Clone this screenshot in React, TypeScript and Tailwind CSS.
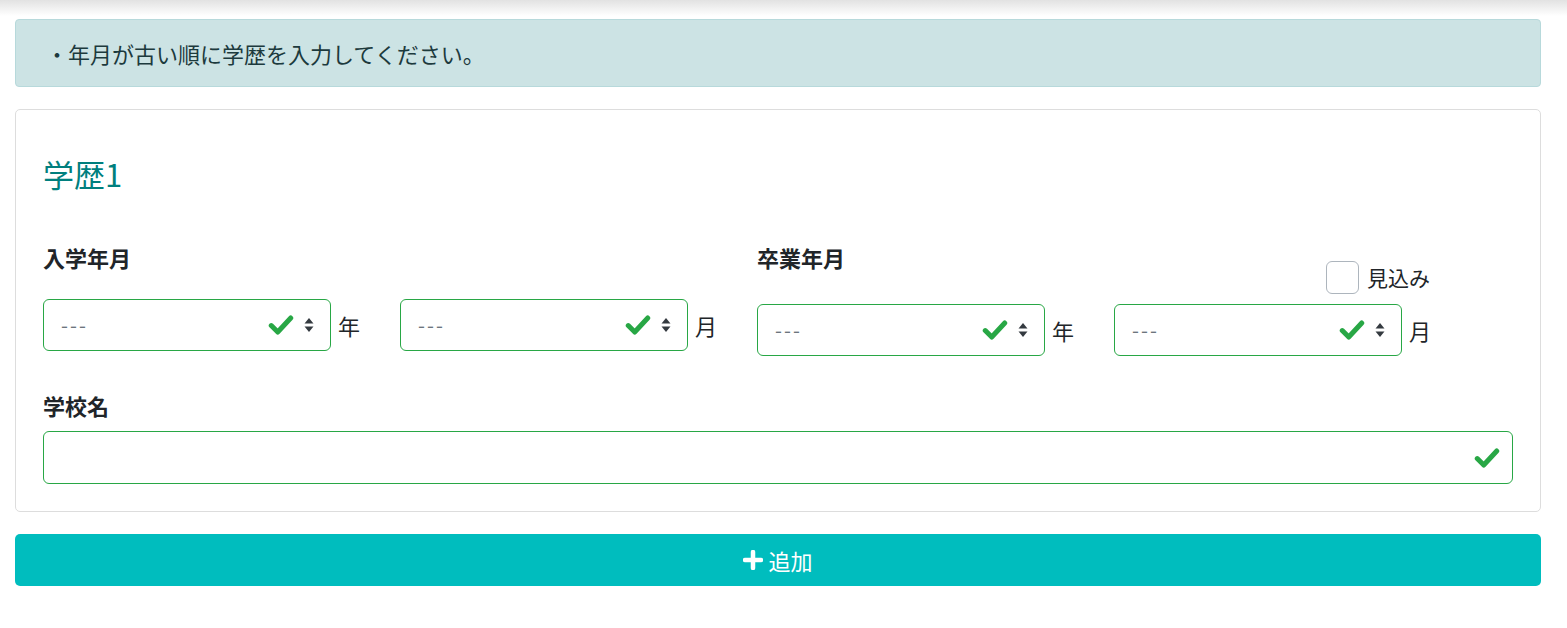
const FONT = '"Noto Sans CJK JP", "Noto Sans", sans-serif'

function Check({ className }: { className?: string }) {
  return (
    <svg viewBox="0 0 24 24" className={className} fill="none">
      <path
        d="M3 12.5 L9 18.5 L21 5.5"
        stroke="#28a745"
        strokeWidth="4.6"
        strokeLinecap="round"
        strokeLinejoin="round"
      />
    </svg>
  )
}

function Arrows() {
  return (
    <svg viewBox="0 0 10 16" className="h-[16px] w-[10px]">
      <path d="M5 1 L9.5 6.5 H0.5 Z" fill="#343a40" />
      <path d="M5 15 L9.5 9.5 H0.5 Z" fill="#343a40" />
    </svg>
  )
}

function SelectBox({ unit }: { unit: string }) {
  return (
    <div className="flex items-center">
      <div className="flex h-[52px] w-[288px] items-center rounded-[6px] border border-[#28a745] bg-white pl-[17px] pr-[16px]">
        <span className="flex-1 text-[20px] tracking-[2px] text-[#6c757d]">---</span>
        <Check className="h-[26px] w-[26px]" />
        <span className="ml-[10px]">
          <Arrows />
        </span>
      </div>
      <span className="ml-[7px] text-[22px] text-[#212529]">{unit}</span>
    </div>
  )
}

export default function App() {
  return (
    <div className="min-h-[628px] bg-white" style={{ fontFamily: FONT }}>
      <div className="h-[19px] bg-[linear-gradient(to_bottom,#e2e2e2,#ffffff_16px)]" />
      <div className="pl-[15px] pr-[26px]">
        <div className="flex h-[68px] items-center rounded-[4px] border border-[#b7d9db] bg-[#cce3e4] pl-[30px] text-[22px] text-[#1c3a3d]">
          ・年月が古い順に学歴を入力してください。
        </div>

        <div className="mt-[22px] rounded-[5px] border border-[#dddddd] px-[27px] pb-[27px] pt-[46px]">
          <h2 className="text-[31px] leading-[36px] font-normal text-[#007f7e]">学歴1</h2>

          <div className="mt-[52px] grid grid-cols-[714px_714px]">
            <div>
              <p className="text-[22px] leading-[27px] font-bold text-[#212529]">入学年月</p>
              <div className="mt-[28px] grid grid-cols-[357px_357px]">
                <SelectBox unit="年" />
                <SelectBox unit="月" />
              </div>
            </div>
            <div>
              <p className="text-[22px] leading-[27px] font-bold text-[#212529]">卒業年月</p>
              <div className="mt-[-10px] flex items-center justify-end pr-[41px]">
                <span className="h-[33px] w-[33px] rounded-[6px] border border-[#adb5bd] bg-white" />
                <span className="ml-[8px] text-[21px] text-[#212529]">見込み</span>
              </div>
              <div className="mt-[10px] grid grid-cols-[357px_357px]">
                <SelectBox unit="年" />
                <SelectBox unit="月" />
              </div>
            </div>
          </div>

          <p className="mt-[35px] text-[22px] leading-[28px] font-bold text-[#212529]">学校名</p>
          <div className="mt-[12px] flex h-[53px] items-center justify-end rounded-[6px] border border-[#28a745] pr-[12px]">
            <Check className="h-[26px] w-[26px]" />
          </div>
        </div>

        <button className="mt-[22px] flex h-[52px] w-full items-center justify-center gap-[5px] rounded-[5px] bg-[#00bdbe] text-[22px] text-white">
          <svg viewBox="0 0 20 20" className="h-[20px] w-[20px]">
            <path d="M10 2 V18 M2 10 H18" stroke="white" strokeWidth="4.5" strokeLinecap="round" />
          </svg>
          <span>追加</span>
        </button>
      </div>
    </div>
  )
}
